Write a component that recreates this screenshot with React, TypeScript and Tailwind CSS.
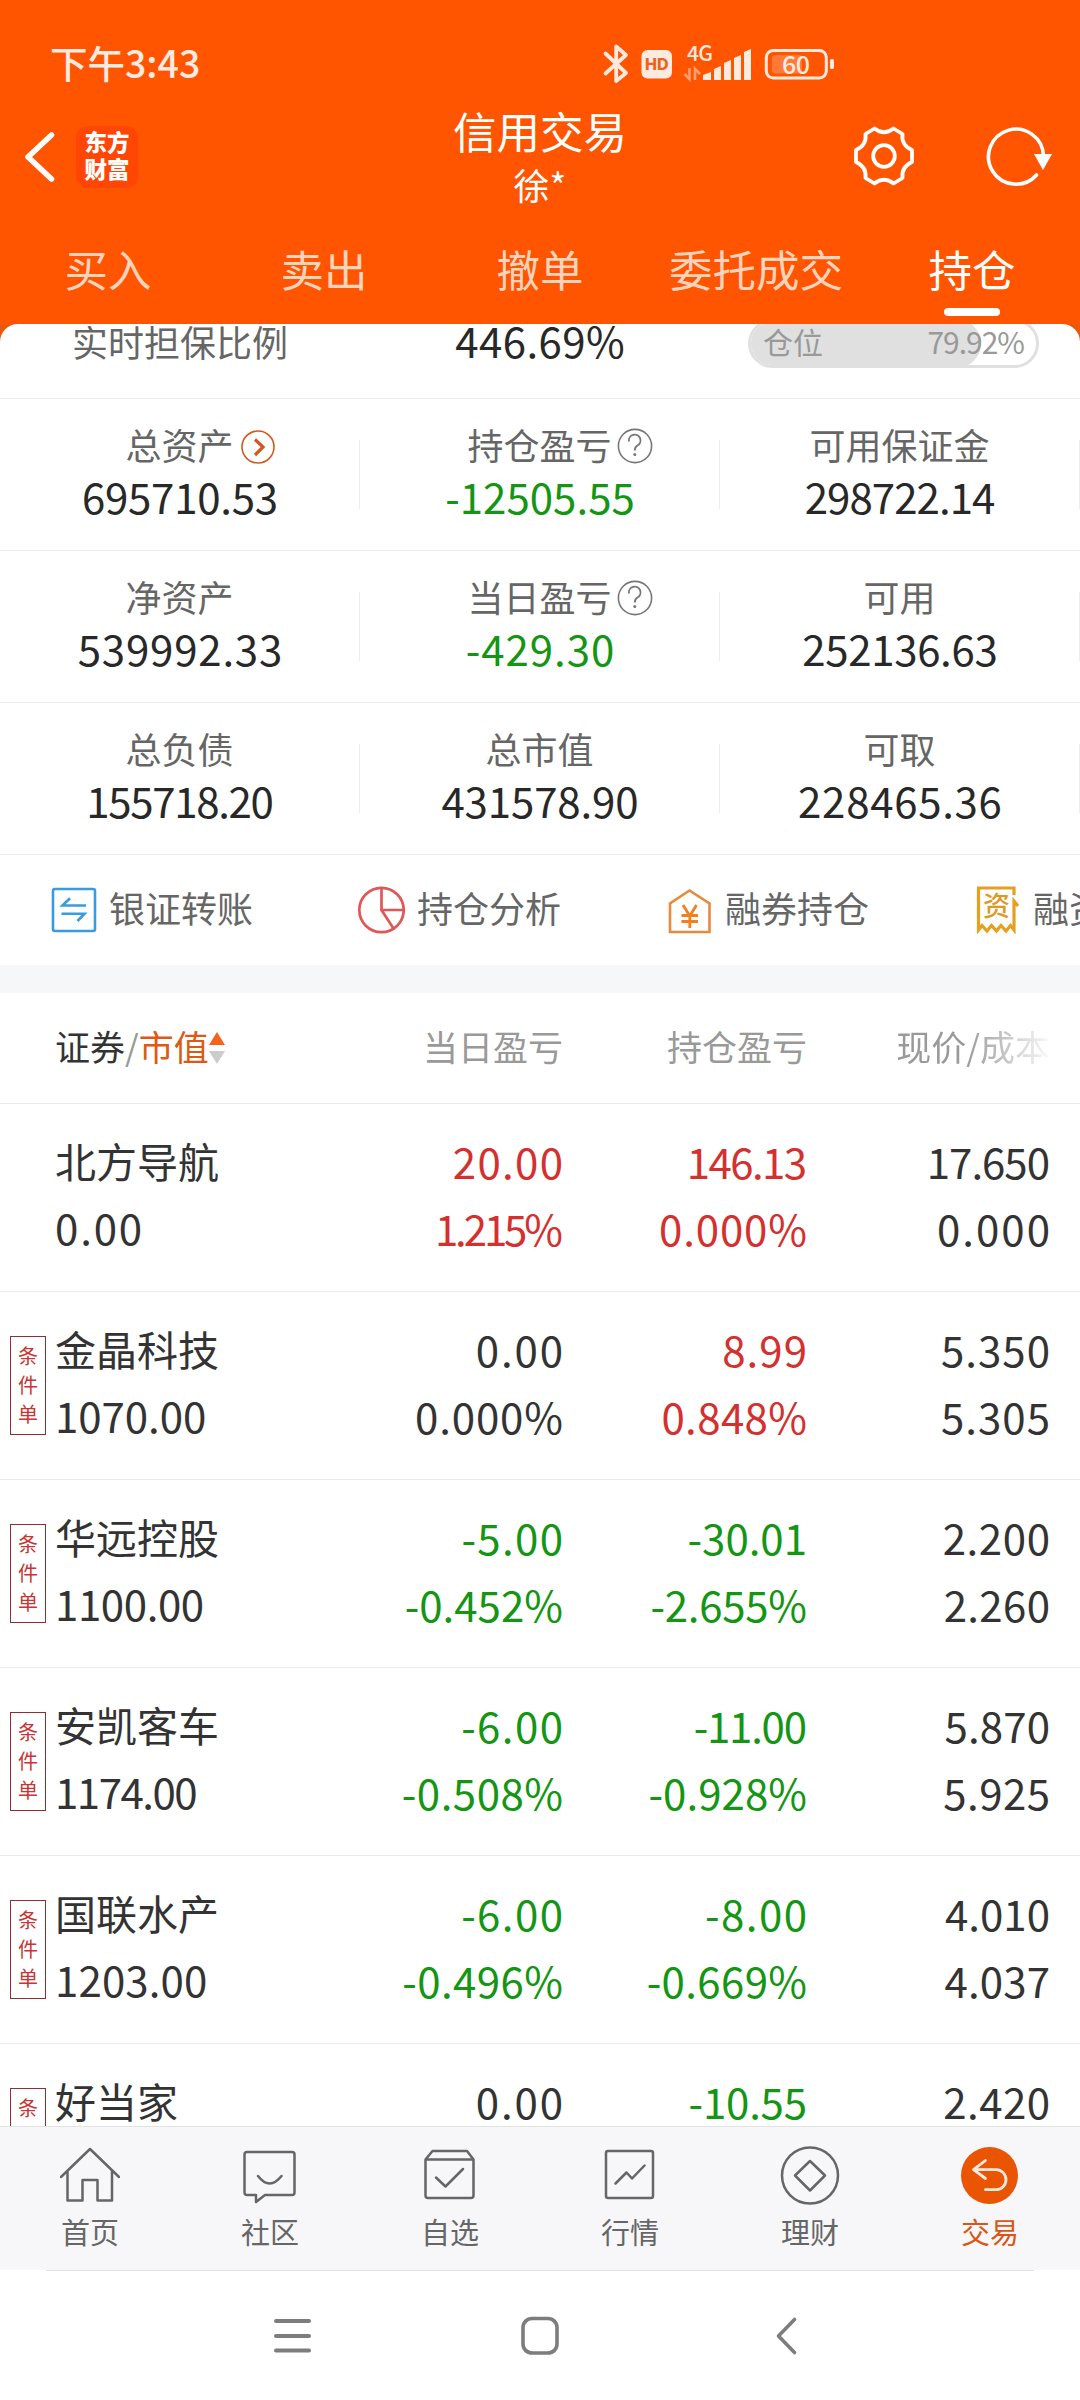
import { clsx } from "clsx";

import type { ReactNode } from "react";

type Tone = "up" | "down" | "flat";

type Cell = { text: string; tone: Tone };

type Holding = {
  name: string;
  value: string;
  flagged: boolean;
  today: [Cell, Cell];
  total: [Cell, Cell];
  price: [string, string];
};

type Summary = { label: string; value: string; mark?: "arrow" | "help"; down?: boolean };

const TABS = ["买入", "卖出", "撤单", "委托成交", "持仓"];

const SUMMARY: Summary[][] = [
  [
    { label: "总资产", value: "695710.53", mark: "arrow" },
    { label: "持仓盈亏", value: "-12505.55", mark: "help", down: true },
    { label: "可用保证金", value: "298722.14" },
  ],
  [
    { label: "净资产", value: "539992.33" },
    { label: "当日盈亏", value: "-429.30", mark: "help", down: true },
    { label: "可用", value: "252136.63" },
  ],
  [
    { label: "总负债", value: "155718.20" },
    { label: "总市值", value: "431578.90" },
    { label: "可取", value: "228465.36" },
  ],
];

const up = (text: string): Cell => ({ text, tone: "up" });
const down = (text: string): Cell => ({ text, tone: "down" });
const flat = (text: string): Cell => ({ text, tone: "flat" });

const HOLDINGS: Holding[] = [
  {
    name: "北方导航",
    value: "0.00",
    flagged: false,
    today: [up("20.00"), up("1.215%")],
    total: [up("146.13"), up("0.000%")],
    price: ["17.650", "0.000"],
  },
  {
    name: "金晶科技",
    value: "1070.00",
    flagged: true,
    today: [flat("0.00"), flat("0.000%")],
    total: [up("8.99"), up("0.848%")],
    price: ["5.350", "5.305"],
  },
  {
    name: "华远控股",
    value: "1100.00",
    flagged: true,
    today: [down("-5.00"), down("-0.452%")],
    total: [down("-30.01"), down("-2.655%")],
    price: ["2.200", "2.260"],
  },
  {
    name: "安凯客车",
    value: "1174.00",
    flagged: true,
    today: [down("-6.00"), down("-0.508%")],
    total: [down("-11.00"), down("-0.928%")],
    price: ["5.870", "5.925"],
  },
  {
    name: "国联水产",
    value: "1203.00",
    flagged: true,
    today: [down("-6.00"), down("-0.496%")],
    total: [down("-8.00"), down("-0.669%")],
    price: ["4.010", "4.037"],
  },
  {
    name: "好当家",
    value: "1210.00",
    flagged: true,
    today: [flat("0.00"), flat("0.000%")],
    total: [down("-10.55"), down("-0.865%")],
    price: ["2.420", "2.441"],
  },
];

// extra px each character takes next to the font's own advance, at 42px
const EXTRA: { [key: string]: number } = {
  "0": 2.8,
  "1": -6.5,
  "2": -0.8,
  "3": 0.9,
  "4": 2,
  "5": 1.2,
  "6": 1.5,
  "7": -4,
  "8": 1.8,
  "9": 1.7,
  ".": -1,
  "-": 1,
  "%": -5,
};

const Num = ({ text, className }: { text: string; className?: string }) => {
  const extra = [...text].reduce((sum, char) => sum + (EXTRA[char] ?? 0), 0);
  const spacing = extra / text.length;
  return (
    <span
      className={clsx("text-[42px] whitespace-nowrap", className)}
      style={{ letterSpacing: `${spacing.toFixed(2)}px`, marginRight: `${(-spacing).toFixed(2)}px` }}
    >
      {text}
    </span>
  );
};

const StatusBar = () => (
  <div className="flex h-[120px] items-start pt-[43px] pl-[50px] text-[#ffeae0]">
    <span className="w-[551px] text-[37.5px] leading-[38px] font-medium">下午3:43</span>
    <svg className="overflow-visible" width="240" height="44" viewBox="601 43 240 44" fill="none">
      <path
        d="M605.5 53.5 626 73 616.2 81V46.500L626 55 605.500 73.500"
        stroke="currentColor"
        strokeWidth="3.800"
        strokeLinejoin="round"
        strokeLinecap="round"
      />
      <rect x="641.500" y="50" width="30.500" height="28.500" rx="6" fill="currentColor" />
      <text x="656.700" y="70" fontSize="16" fontWeight="800" textAnchor="middle" fill="#f0621c" fontFamily="Inter, sans-serif">
        HD
      </text>
      <text x="687" y="60.500" fontSize="21" fontWeight="500" fill="currentColor" textLength="26">
        4G
      </text>
      <path d="M689.500 68V79L684.500 74M695 80V69L700 74" stroke="currentColor" strokeWidth="2.600" opacity=".5" />
      <path
        d="M703 80V75L711 72V80ZM714 80V69L721 66V80ZM724 80V63L731 60V80ZM734 80V58L741 55V80ZM744 80V52L751 49V80Z"
        fill="currentColor"
      />
      <rect x="766.300" y="50.500" width="60" height="27.500" rx="7" stroke="currentColor" strokeWidth="3" />
      <rect x="772" y="55" width="30" height="18.500" rx="3" fill="currentColor" opacity=".25" />
      <rect x="830" y="59" width="4" height="10" rx="1.500" fill="currentColor" />
      <text x="796" y="73.500" fontSize="25" fontWeight="500" textAnchor="middle" fill="currentColor" textLength="28">
        60
      </text>
    </svg>
  </div>
);

const TitleBar = () => (
  <div className="grid h-[108px] grid-cols-3">
    <div className="flex items-start pt-1.5 pl-6">
      <svg className="mt-[5px]" width="32" height="52" viewBox="0 0 32 52" fill="none">
        <path d="M27.500 4 4 26 27.500 48" stroke="#fff" strokeWidth="5.500" strokeLinecap="round" strokeLinejoin="round" />
      </svg>
      <div className="ml-5 flex size-[62px] items-center justify-center rounded-xl bg-[#ff4605] pb-1 text-[22.5px] leading-[27px] font-black text-white">
        <p>
          东方
          <br />
          财富
        </p>
      </div>
    </div>
    <div className="flex flex-col items-center text-white">
      <span className="-mt-[19px] text-[43.5px] leading-[60px]">信用交易</span>
      <span className="-mt-px text-[36px] leading-[48px]">徐*</span>
    </div>
    <div className="flex items-start justify-end gap-[68.5px] pt-1 pr-[26px]">
      <svg width="64" height="64" viewBox="-32 -32 64 64" fill="none" stroke="#fff" strokeWidth="3.800" strokeLinejoin="round">
        <path d="M-9.500-27.500Q0-20 9.500-27.500L18.500-22Q17-11 28-6V6Q17 11 18.500 22L9.500 27.500Q0 20-9.500 27.500L-18.500 22Q-17 11-28 6V-6Q-17-11-18.500-22Z" />
        <circle r="10.800" />
      </svg>
      <svg width="70" height="64" viewBox="-32 -33 70 64" fill="none">
        <path d="M20.500 18A27.500 27.500 0 1 1 27.500-1" stroke="#fff" strokeWidth="3.600" strokeLinecap="round" />
        <path d="M18-3H36L27 13Z" fill="#fff" />
      </svg>
    </div>
  </div>
);

const Tabs = () => (
  <div className="grid h-24 grid-cols-5">
    {TABS.map((tab) => (
      <div
        key={tab}
        className={clsx(
          "flex flex-col items-center pt-[9px] text-[43.5px] leading-[64px]",
          tab === "持仓" ? "text-white" : "text-[#ffd3bc]"
        )}
      >
        {tab}
        {tab === "持仓" && <div className="mt-[7px] h-2 w-14 rounded-full bg-white" />}
      </div>
    ))}
  </div>
);

const Mark = ({ kind }: { kind: "arrow" | "help" }) =>
  kind === "arrow" ? (
    <svg className="absolute top-[11px] left-full ml-1.5" width="36" height="36" viewBox="0 0 36 36" fill="none" stroke="#d4581c">
      <circle cx="18" cy="18" r="16" strokeWidth="1.600" />
      <path d="M15 10.500 23 18 15 26" strokeWidth="3.200" />
    </svg>
  ) : (
    <svg className="absolute top-[10px] left-full ml-[5px]" width="36" height="36" viewBox="0 0 36 36" fill="none" stroke="#777">
      <circle cx="18" cy="18" r="16.600" strokeWidth="1.600" />
      <path d="M12 13.500A5.800 5.800 0 1 1 20.500 17.500Q17.800 19 17.800 22.500" strokeWidth="1.900" />
      <circle cx="17.800" cy="26.500" r="1.500" fill="#777" stroke="none" />
    </svg>
  );

const Ratio = () => (
  <div className="-mt-[35px] grid h-[110px] grid-cols-3 items-center border-b border-[#ececec]">
    <span className="-mt-[6px] text-center text-[36px] leading-[52px] text-[#666]">实时担保比例</span>
    <Num text="446.69%" className="-mt-[7px] text-center leading-[52px] text-[#282828]" />
    <div className="relative ml-7 h-[49px] w-[291px] overflow-hidden rounded-full border-[3px] border-[#e0e0e0]">
      <div className="-my-[3px] -ml-[3px] h-[49px] w-[233px] rounded-r-full bg-[#e0e0e0]" />
      <div className="absolute inset-0 flex items-center justify-between pr-3 pb-1 pl-3 text-[30px] text-[#999]">
        <span>仓位</span>
        <span className="tracking-[-1px]">79.92%</span>
      </div>
    </div>
  </div>
);

const SummaryGrid = () => (
  <div>
    {SUMMARY.map((row, index) => (
      <div key={index} className="grid h-[152px] grid-cols-3 border-b border-[#ececec]">
        {row.map((item) => (
          <div key={item.label} className="relative flex flex-col items-center pt-[19px]">
            <div className="relative -ml-px text-[36px] leading-[52px] text-[#666]">
              {item.label}
              {item.mark && <Mark kind={item.mark} />}
            </div>
            <Num text={item.value} className={clsx("leading-[52px]", item.down ? "text-[#149614]" : "text-[#282828]")} />
            <div className="absolute top-[41px] right-0 h-[69px] w-px bg-[#ececec]" />
          </div>
        ))}
      </div>
    ))}
  </div>
);

const ACTIONS: { label: string; icon: ReactNode }[] = [
  {
    label: "银证转账",
    icon: (
      <g stroke="#3a9be0" strokeWidth="2.600">
        <rect x="4" y="3" width="42" height="42" rx="2" />
        <path d="M37 19.500H13.500L21 12.300M12.500 27.700H35.500L28.500 35" />
      </g>
    ),
  },
  {
    label: "持仓分析",
    icon: (
      <g stroke="#df5757" strokeWidth="2.700">
        <circle cx="24.500" cy="24" r="22.200" />
        <path d="M24.500 1.500V24H46.500M24.500 24 36.500 42.500" />
      </g>
    ),
  },
  {
    label: "融券持仓",
    icon: (
      <g stroke="#e68a3c" strokeWidth="2.600">
        <path d="M5 46V17.500L24.500 4.500 44.500 17.500V46Z" />
        <path d="M18 19 24.800 30 31.500 19M24.800 30V42M16.500 29.500H33M16.500 35.500H33" stroke="#f08020" strokeWidth="2.800" />
      </g>
    ),
  },
  {
    label: "融资持仓",
    icon: (
      <g>
        <path
          d="M41 9V2H5.500V44L9 39.500 14 45 18.500 39.500 23.500 45 28 39.500 33 45 37.500 39.500 41 44V15L45 20"
          stroke="#e5a01f"
          strokeWidth="3.200"
        />
        <text x="23.500" y="30" fontSize="27" textAnchor="middle" fill="#dc9a22" fontWeight="500">
          资
        </text>
      </g>
    ),
  },
];

const Actions = () => (
  <div className="flex h-[110px] items-center overflow-hidden pl-[49px]">
    {ACTIONS.map(({ label, icon }) => (
      <div key={label} className="flex w-[308px] shrink-0 items-center gap-3 text-[36px] leading-[52px] text-[#666]">
        <svg className="shrink-0" width="48" height="48" viewBox="0 0 48 48" fill="none">
          {icon}
        </svg>
        <span className="-mt-1.5 whitespace-nowrap">{label}</span>
      </div>
    ))}
  </div>
);

const TableHead = () => (
  <div className="grid h-[111px] grid-cols-[320px_243px_244px_243px] items-center border-b border-[#ececec] pb-1 text-right text-[35px] text-[#999]">
    <div className="flex items-center pl-[55px]">
      <span className="text-[#333]">证券</span>
      <span>/</span>
      <span className="text-[#dc5a14]">市值</span>
      <svg className="mt-1" width="16" height="32" viewBox="0 0 16 32">
        <path d="M8 0 16 13H0Z" fill="#f26419" />
        <path d="M0 19H16L8 32Z" fill="#ccc" />
      </svg>
    </div>
    <span>当日盈亏</span>
    <span>持仓盈亏</span>
    <div className="bg-gradient-to-r from-[#999] from-65% to-[#fafafa] bg-clip-text whitespace-nowrap text-transparent">现价/成本</div>
  </div>
);

const TONES: { [key in Tone]: string } = {
  up: "text-[#d4302f]",
  down: "text-[#149614]",
  flat: "text-[#333]",
};

const Pair = ({ cells }: { cells: Cell[] }) => (
  <div className="flex flex-col items-end">
    {cells.map((cell, index) => (
      <Num key={index} text={cell.text} className={clsx("leading-[67px]", TONES[cell.tone])} />
    ))}
  </div>
);

const HoldingRow = ({ item }: { item: Holding }) => (
  <div className="relative grid h-[188px] shrink-0 grid-cols-[320px_243px_244px_243px] border-b border-[#ececec] pt-[23px]">
    {item.flagged && (
      <div className="absolute top-[44px] left-[10px] flex h-[99px] w-9 flex-col items-center border border-[#8f2f2f] pt-1 text-[20px] leading-[29px] text-[#c93434]">
        <span>条</span>
        <span>件</span>
        <span>单</span>
      </div>
    )}
    <div className="flex flex-col pl-[55px] text-[#333]">
      <span className="text-[41px] leading-[66px]">{item.name}</span>
      <Num text={item.value} className="leading-[67px]" />
    </div>
    <Pair cells={item.today} />
    <Pair cells={item.total} />
    <Pair cells={item.price.map(flat)} />
  </div>
);

const NAV: { label: string; icon: ReactNode }[] = [
  { label: "首页", icon: <path d="M1 31 30 3 59 31M7.500 25.500V54.500H22.500V34H37.500V54.500H52V25.500" /> },
  {
    label: "社区",
    icon: <path d="M7 6H52Q54.500 6 54.500 8.500V46.500Q54.500 49 52 49H25L16 56V49H7Q4.500 49 4.500 46.500V8.500Q4.500 6 7 6ZM18 30Q29.500 45 41.500 30" />,
  },
  {
    label: "自选",
    icon: <path d="M5.500 13.500 12.500 5H47L53.500 13.500V49.500Q53.500 52 51 52H8Q5.500 52 5.500 49.500ZM5.500 13.500H53.500M16 31.500 25.500 40.500 43 23" />,
  },
  {
    label: "行情",
    icon: (
      <>
        <rect x="6" y="5" width="47" height="47" rx="2" />
        <path d="M15.500 37.500 26.500 26.500 32 32.500 44.500 19.500" />
      </>
    ),
  },
  {
    label: "理财",
    icon: (
      <>
        <circle cx="30" cy="29.500" r="28" />
        <path d="M30 15 45 29.500 30 44.500 15 29.500Z" />
      </>
    ),
  },
  {
    label: "交易",
    icon: (
      <>
        <circle cx="29.500" cy="29.500" r="28.500" fill="#ea5504" stroke="none" />
        <path d="M25.500 14.500 13.500 23.700 25.500 32.500M13.500 23.700H36A10 10 0 0 1 36 43.700H25.500" stroke="#ffe9dc" strokeWidth="2.800" />
      </>
    ),
  },
];

const BottomNav = () => (
  <div className="grid h-[144px] shrink-0 grid-cols-6 border-t border-[#e2e2e4] bg-[#f7f7fa]">
    {NAV.map(({ label, icon }) => (
      <div key={label} className="flex flex-col items-center pt-[19px]">
        <svg width="60" height="60" viewBox="0 0 60 60" fill="none" stroke="#666" strokeWidth="2.500" strokeLinejoin="round" strokeLinecap="round">
          {icon}
        </svg>
        <span className={clsx("mt-1 text-[29px] leading-[42px]", label === "交易" ? "text-[#dc5514]" : "text-[#666]")}>
          {label}
        </span>
      </div>
    ))}
  </div>
);

const SystemNav = () => (
  <div className="flex flex-1 flex-col">
    <div className="mx-[46px] h-px bg-[#e0e0e0]" />
    <div className="flex flex-1 items-center justify-center gap-[207px]">
      <svg width="40" height="40" viewBox="0 0 40 40" fill="none" stroke="#7d7d7d" strokeWidth="4" strokeLinecap="round">
        <path d="M3 5H36M3 20H36M3 34.500H36" />
      </svg>
      <svg width="40" height="40" viewBox="0 0 40 40" fill="none" stroke="#7d7d7d" strokeWidth="3.600">
        <rect x="3" y="2.500" width="34" height="34.500" rx="9" />
      </svg>
      <svg width="40" height="40" viewBox="0 0 40 40" fill="none" stroke="#7d7d7d" strokeWidth="3.600" strokeLinecap="round" strokeLinejoin="round">
        <path d="M27.500 3.500 11.500 20 27.500 36.500" />
      </svg>
    </div>
  </div>
);

const App = () => (
  <div className="flex h-[2400px] w-[1080px] flex-col overflow-hidden bg-white font-['Noto_Sans_CJK_SC',sans-serif]">
    <div className="h-[324px] shrink-0 bg-[#ff5500]">
      <StatusBar />
      <TitleBar />
      <Tabs />
    </div>
    <div className="h-[1802px] shrink-0 overflow-hidden bg-[#e9560c]">
      <div className="h-full overflow-hidden rounded-t-[18px] bg-white">
        <Ratio />
        <SummaryGrid />
        <Actions />
        <div className="h-7 bg-[#f6f7f9]" />
        <TableHead />
        {HOLDINGS.map((item) => (
          <HoldingRow key={item.name} item={item} />
        ))}
      </div>
    </div>
    <BottomNav />
    <SystemNav />
  </div>
);

export default App;
